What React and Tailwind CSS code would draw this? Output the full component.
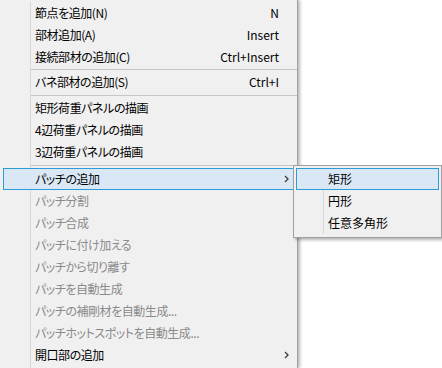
import React from "react";

const FONT = "font-['Noto_Sans_CJK_JP','Noto_Sans',sans-serif]";

const Arrow = () => (
  <svg width="5" height="8" viewBox="0 0 5 8" className="block">
    <path d="M1 1 L4 4 L1 7" stroke="#3c3c3c" strokeWidth="1.3" fill="none" />
  </svg>
);

const main = [
  { t: "節点を追加(N)", s: "N" },
  { t: "部材追加(A)", s: "Insert" },
  { t: "接続部材の追加(C)", s: "Ctrl+Insert" },
  { sep: 1 },
  { t: "バネ部材の追加(S)", s: "Ctrl+I" },
  { sep: 2 },
  { t: "矩形荷重パネルの描画" },
  { t: "4辺荷重パネルの描画" },
  { t: "3辺荷重パネルの描画" },
  { sep: 3 },
  { t: "パッチの追加", arrow: true, hi: true },
  { t: "パッチ分割", dis: true },
  { t: "パッチ合成", dis: true },
  { t: "パッチに付け加える", dis: true },
  { t: "パッチから切り離す", dis: true },
  { t: "パッチを自動生成", dis: true },
  { t: "パッチの補剛材を自動生成...", dis: true },
  { t: "パッチホットスポットを自動生成...", dis: true },
  { t: "開口部の追加", arrow: true },
];

function Sep({ kind }) {
  const h = kind === 1 ? "h-[3px] pt-[1px]" : kind === 2 ? "h-[4px] pt-[2px]" : "h-[5px] pt-[2px]";
  return (
    <div className="flex h-auto">
      <div className="w-[31px] shrink-0 border-r border-[#d7d7d7]" />
      <div className={`flex-1 ${h}`}>
        <div className="h-px bg-[#c6c6c6]" />
      </div>
    </div>
  );
}

const TXT = "[font-feature-settings:'palt'] tracking-[-0.45px]";

function MainItem({ it }) {
  const color = it.dis ? "text-[#8a8a8a]" : "text-black";
  if (it.hi) {
    return (
      <div className="mx-[3px] flex h-[22px] items-center border border-[#2d9bd8] bg-[#dae8f6]">
        <div className="w-[27px] shrink-0" />
        <div className={`flex-1 pl-[4px] ${color} ${TXT}`}>{it.t}</div>
        <div className="flex w-[14px] shrink-0 pl-[5px]">{it.arrow && <Arrow />}</div>
      </div>
    );
  }
  return (
    <div className="mx-[3px] flex h-[22px] items-stretch">
      <div className="w-[28px] shrink-0 border-r border-[#d7d7d7]" />
      <div className={`flex flex-1 items-center pl-[4px] ${color} ${TXT}`}>{it.t}</div>
      {it.s && <div className="flex items-center text-black">{it.s}</div>}
      <div className="flex w-[15px] shrink-0 items-center pl-[5px]">{it.arrow && <Arrow />}</div>
    </div>
  );
}

function SubItem({ t, hi }) {
  if (hi) {
    return (
      <div className="mx-[2px] flex h-[22px] items-center border border-[#2d9bd8] bg-[#dae8f6]">
        <div className="w-[27px] shrink-0" />
        <div className="pl-[4px] text-black">{t}</div>
      </div>
    );
  }
  return (
    <div className="mx-[2px] flex h-[22px] items-stretch">
      <div className="w-[28px] shrink-0 border-r border-[#d7d7d7]" />
      <div className="flex items-center pl-[4px] text-black">{t}</div>
    </div>
  );
}

export default function App() {
  return (
    <div className={`relative h-[368px] w-[442px] overflow-hidden bg-white text-[12px] leading-none ${FONT}`}>
      <div className="flex h-full w-[298px] flex-col border-r border-[#a0a0a0] bg-[#f0f0f0] pt-[2px] shadow-[2px_0_3px_rgba(0,0,0,0.28)]">
        {main.map((it, i) =>
          it.sep ? <Sep key={i} kind={it.sep} /> : <MainItem key={i} it={it} />
        )}
        <div className="flex flex-1">
          <div className="ml-[3px] w-[28px] shrink-0 border-r border-[#d7d7d7]" />
        </div>
      </div>
      <div className="absolute left-[293px] top-[165px] w-[149px] border border-[#a0a0a0] bg-[#f0f0f0] pb-[3px] pt-[2px] shadow-[2px_2px_3px_rgba(0,0,0,0.3)]">
        <SubItem t="矩形" hi />
        <SubItem t="円形" />
        <SubItem t="任意多角形" />
      </div>
    </div>
  );
}
